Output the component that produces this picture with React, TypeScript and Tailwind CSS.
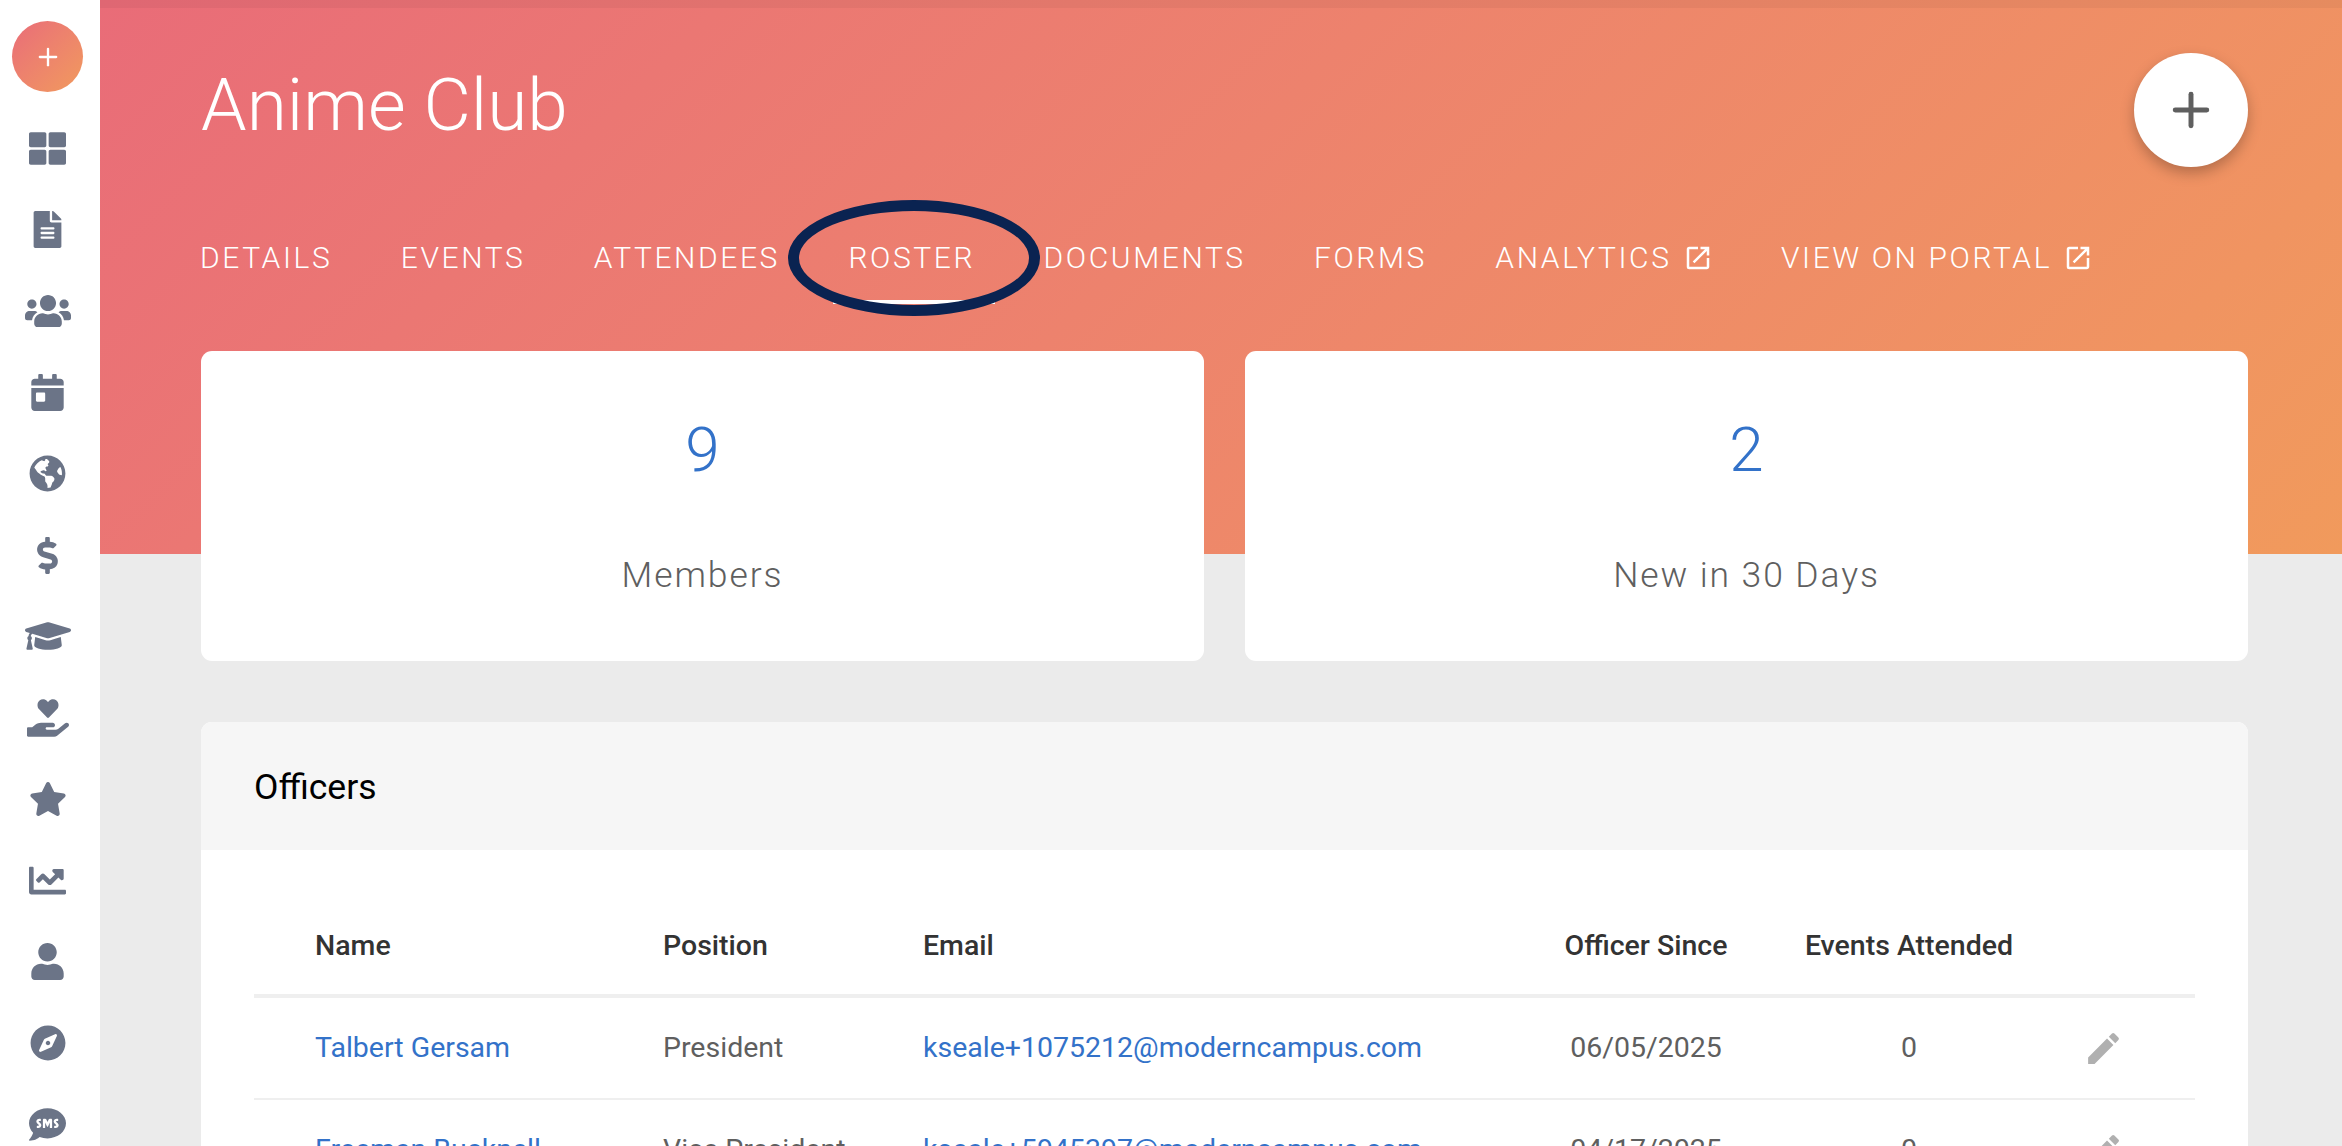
import { Plus } from 'lucide-react';
import { MdEdit, MdOpenInNew } from 'react-icons/md';
import {
  FaThLarge, FaFileAlt, FaUsers, FaCalendarDay, FaGlobeAmericas, FaDollarSign, FaGraduationCap,
  FaHandHoldingHeart, FaStar, FaChartLine, FaUser, FaCompass, FaSms,
} from 'react-icons/fa';

const navIcons = [
  { Icon: FaThLarge, size: 37 },
  { Icon: FaFileAlt, size: 37 },
  { Icon: FaUsers, size: 46 },
  { Icon: FaCalendarDay, size: 37 },
  { Icon: FaGlobeAmericas, size: 37 },
  { Icon: FaDollarSign, size: 37 },
  { Icon: FaGraduationCap, size: 46 },
  { Icon: FaHandHoldingHeart, size: 42 },
  { Icon: FaStar, size: 38 },
  { Icon: FaChartLine, size: 37 },
  { Icon: FaUser, size: 37 },
  { Icon: FaCompass, size: 36 },
  { Icon: FaSms, size: 37 },
];

const tabs = [
  { label: 'DETAILS' },
  { label: 'EVENTS' },
  { label: 'ATTENDEES' },
  { label: 'ROSTER', active: true },
  { label: 'DOCUMENTS' },
  { label: 'FORMS' },
  { label: 'ANALYTICS', external: true },
  { label: 'VIEW ON PORTAL', external: true },
];

const officers = [
  { name: 'Talbert Gersam', position: 'President', email: 'kseale+1075212@moderncampus.com', since: '06/05/2025', events: 0 },
  { name: 'Freeman Bucknell', position: 'Vice President', email: 'kseale+5945397@moderncampus.com', since: '04/17/2025', events: 0 },
];

function StatCard({ value, label }: { value: string; label: string }) {
  return (
    <div className="flex-1 h-[310px] bg-white rounded-[11px] flex flex-col items-center">
      <div className="mt-[63px] text-[62px] leading-[72px] font-light text-[#3372c9]">{value}</div>
      <div className="mt-[69px] text-[35.5px] leading-[40px] font-light tracking-[1.9px] text-[#5f5f5f]">{label}</div>
    </div>
  );
}

export default function App() {
  return (
    <div className="relative flex h-screen overflow-hidden bg-[#ebebeb] font-['Roboto',sans-serif]">
      <aside className="w-[100px] shrink-0 bg-white flex flex-col items-center">
        <button className="shrink-0 mt-[21px] ml-[-5px] w-[71px] h-[71px] rounded-full bg-linear-135 from-[#e96c78] to-[#f19a5c] flex items-center justify-center text-white">
          <Plus size={28} strokeWidth={2} />
        </button>
        <div className="mt-[16px] w-full pr-[5px] flex flex-col items-center">
          {navIcons.map(({ Icon, size }, i) => (
            <div key={i} className="h-[81.3px] w-full shrink-0 flex items-center justify-center text-[#6b7487]">
              <Icon size={size} />
            </div>
          ))}
        </div>
      </aside>

      <main className="relative flex-1 min-w-0">
        <div className="relative h-[554px] bg-linear-135 from-[#e96c78] to-[#f19a5c] pl-[101px] pr-[94px] pt-[53px]">
          <div className="absolute inset-x-0 top-0 h-[8px] bg-black/[0.04]" />
          <div className="flex items-start justify-between">
            <h1 className="text-[73px] leading-[104px] font-light text-white">Anime Club</h1>
            <button className="w-[114px] h-[114px] rounded-full bg-white shadow-[0_6px_14px_rgba(0,0,0,0.25)] flex items-center justify-center text-[#5f5f5f]">
              <Plus size={54} strokeWidth={2.2} />
            </button>
          </div>
          <nav className="mt-[71px] ml-[-1px] flex items-center gap-[68.4px]">
            {tabs.map((tab) => (
              <div key={tab.label} className="relative flex items-center gap-[11px] text-[30px] leading-[40px] font-light tracking-[2.6px] text-white whitespace-nowrap">
                {tab.label}
                {tab.external && <MdOpenInNew size={30} />}
                {tab.active && <div className="absolute left-[-15px] right-[-20px] top-[62px] h-[4px] bg-white" />}
              </div>
            ))}
          </nav>
        </div>

        <div className="relative pl-[101px] pr-[94px] mt-[-203px]">
          <div className="flex gap-[41px]">
            <StatCard value="9" label="Members" />
            <StatCard value="2" label="New in 30 Days" />
          </div>

          <section className="mt-[61px] bg-white rounded-[11px] overflow-hidden">
            <div className="h-[128px] bg-[#f6f6f6] flex items-center px-[53px] pt-[4px] text-[35.5px] text-black">Officers</div>
            <div className="px-[53px] pt-[75px]">
              <table className="w-full table-fixed border-collapse text-[28.5px]">
                <thead>
                  <tr className="border-b-[4px] border-[#efefef] h-[71px] text-[#333] font-medium align-top">
                    <th className="w-[409px] pl-[61px] text-left font-medium">Name</th>
                    <th className="w-[260px] text-left font-medium">Position</th>
                    <th className="w-[623px] text-left font-medium">Email</th>
                    <th className="w-[200px] text-center font-medium">Officer Since</th>
                    <th className="w-[326px] text-center font-medium">Events Attended</th>
                    <th />
                  </tr>
                </thead>
                <tbody>
                  {officers.map((o) => (
                    <tr key={o.name} className="border-b-2 border-[#efefef] h-[103px] text-[#5f5f5f]">
                      <td className="pl-[61px] text-[#3372c9]">{o.name}</td>
                      <td>{o.position}</td>
                      <td className="text-[#3372c9]">{o.email}</td>
                      <td className="text-center">{o.since}</td>
                      <td className="text-center">{o.events}</td>
                      <td className="pl-[11px] text-[#b0b0b0]"><MdEdit size={41} /></td>
                    </tr>
                  ))}
                </tbody>
              </table>
            </div>
          </section>
        </div>
      </main>

      {/* hand drawn annotation over the Roster tab */}
      <div className="absolute left-[788px] top-[200px] w-[252px] h-[116px] rounded-[50%] border-[11px] border-[#0a2351]" />
    </div>
  );
}
